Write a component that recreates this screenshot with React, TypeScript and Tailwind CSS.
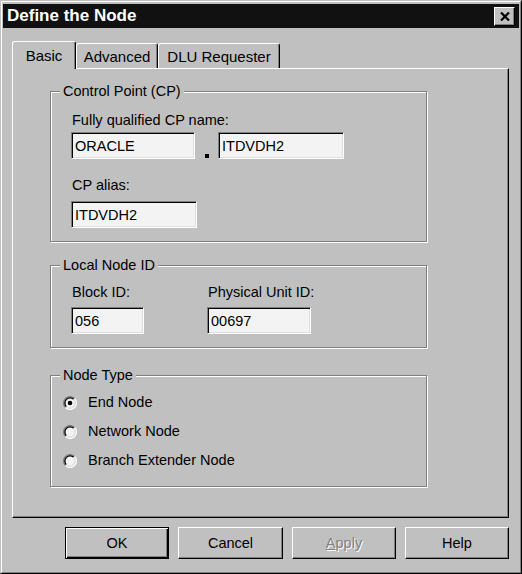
import type { ReactNode } from 'react';

const tabs = [
  { label: 'Basic', width: 'w-[64px]', active: true },
  { label: 'Advanced', width: 'w-[82px]', active: false },
  { label: 'DLU Requester', width: 'w-[122px]', active: false },
];

const Field = ({ value, className }: { value: string; className: string }) => (
  <input
    readOnly
    value={value}
    className={`h-[27px] bg-[#f3f3f3] pl-[3px] text-black outline-none border border-t-[#808080] border-l-[#808080] border-r-white border-b-white shadow-[inset_1px_1px_0_#000,inset_-1px_-1px_0_#dfdfdf] ${className}`}
  />
);

const GroupBox = ({ title, className, children }: { title: string; className: string; children: ReactNode }) => (
  <fieldset className={`w-[377px] border border-[#808080] shadow-[inset_1px_1px_0_#fff,1px_1px_0_#fff] ${className}`}>
    <legend className="ml-[9px] px-[3px] bg-[#c0c0c0] leading-[17px]">{title}</legend>
    {children}
  </fieldset>
);

const Radio = ({ label, checked }: { label: string; checked?: boolean }) => (
  <div className="h-[29px] flex items-center">
    <svg width="14" height="14" viewBox="0 0 12 12" className="mr-[11px]">
      <circle cx="6" cy="6" r="4.5" fill="#f3f3f3" />
      <path d="M2.11 9.89 A5.5 5.5 0 0 1 9.89 2.11" fill="none" stroke="#808080" strokeWidth="1.1" />
      <path d="M9.89 2.11 A5.5 5.5 0 0 1 2.11 9.89" fill="none" stroke="#fff" strokeWidth="1.1" />
      <path d="M2.82 9.18 A4.5 4.5 0 0 1 9.18 2.82" fill="none" stroke="#000" strokeWidth="1.1" />
      <path d="M9.18 2.82 A4.5 4.5 0 0 1 2.82 9.18" fill="none" stroke="#dfdfdf" strokeWidth="1.1" />
      {checked && <circle cx="6" cy="6" r="2" fill="#000" />}
    </svg>
    <span>{label}</span>
  </div>
);

const Button = ({ children, className, isDefault }: { children: ReactNode; className: string; isDefault?: boolean }) => (
  <button
    className={`h-[32px] flex items-center justify-center ${
      isDefault
        ? 'border border-black shadow-[inset_1px_1px_0_#fff,inset_-1px_-1px_0_#000,inset_-2px_-2px_0_#808080]'
        : 'border border-t-white border-l-white border-r-black border-b-black shadow-[inset_-1px_-1px_0_#808080]'
    } ${className}`}
  >
    {children}
  </button>
);

export default function App() {
  return (
    <div className="w-[522px] h-[574px] bg-[#c0c0c0] border border-[#c0c0c0] border-r-black border-b-black font-['Liberation_Sans',Arial,sans-serif] text-[14.5px] leading-[17px] text-black">
      <div className="h-full flex flex-col border border-white border-r-[#808080] border-b-[#808080] px-[1px] pt-[2px]">
        {/* title bar */}
        <div className="h-[24px] bg-[#111111] flex items-center justify-between pl-[4px] pr-[4px]">
          <span className="text-white font-bold text-[17px] leading-[20px]">Define the Node</span>
          <div className="w-[21px] h-[19px] bg-[#c0c0c0] flex items-center justify-center border border-t-white border-l-white border-r-black border-b-black shadow-[inset_-1px_-1px_0_#808080]">
            <svg width="10" height="9" viewBox="0 0 10 9">
              <path d="M1 0.5 L9 8.5 M9 0.5 L1 8.5" stroke="#000" strokeWidth="2.2" />
            </svg>
          </div>
        </div>

        {/* tabs */}
        <div className="mt-[13px] ml-[9px] flex items-end">
          {tabs.map((tab) => (
            <div
              key={tab.label}
              className={`${tab.width} flex items-center justify-center bg-[#c0c0c0] rounded-t-[3px] border-l border-t border-l-white border-t-white border-r border-r-black shadow-[inset_-1px_0_0_#808080] text-[15px] ${
                tab.active ? 'h-[28px] -mb-[1px] relative z-10' : 'h-[25px]'
              }`}
            >
              {tab.label}
            </div>
          ))}
        </div>

        {/* panel */}
        <div className="ml-[9px] mr-[10px] h-[450px] border border-t-white border-l-white border-r-black border-b-black shadow-[inset_-1px_-1px_0_#808080] pt-[14px] pl-[37px]">
          <GroupBox title="Control Point (CP)" className="">
            <div className="pl-[20px] pt-[12px] pb-[13px]">
              <div className="pl-[1px]">Fully qualified CP name:</div>
              <div className="mt-[3px] flex items-end">
                <Field value="ORACLE" className="w-[124px]" />
                <div className="ml-[10px] mr-[9px] mb-[1px] w-[4px] h-[4px] bg-black" />
                <Field value="ITDVDH2" className="w-[126px]" />
              </div>
              <div className="mt-[18px] pl-[1px]">CP alias:</div>
              <div className="mt-[7px]">
                <Field value="ITDVDH2" className="w-[126px]" />
              </div>
            </div>
          </GroupBox>

          <GroupBox title="Local Node ID" className="mt-[15px]">
            <div className="pl-[20px] pt-[10px] pb-[13px] flex">
              <div className="w-[136px]">
                <div className="pl-[1px]">Block ID:</div>
                <Field value="056" className="mt-[6px] w-[73px]" />
              </div>
              <div>
                <div className="pl-[1px]">Physical Unit ID:</div>
                <Field value="00697" className="mt-[6px] w-[104px]" />
              </div>
            </div>
          </GroupBox>

          <GroupBox title="Node Type" className="mt-[19px]">
            <div className="pl-[12px] pt-[4px] pb-[11px]">
              <Radio label="End Node" checked />
              <Radio label="Network Node" />
              <Radio label="Branch Extender Node" />
            </div>
          </GroupBox>
        </div>

        {/* buttons */}
        <div className="mt-[9px] pr-[10px] flex justify-end gap-[9px]">
          <Button className="w-[104px]" isDefault>OK</Button>
          <Button className="w-[105px]">Cancel</Button>
          <Button className="w-[104px] text-[#808080] [text-shadow:1px_1px_0_#fff]">
            <span className="underline">A</span>pply
          </Button>
          <Button className="w-[104px]">Help</Button>
        </div>
      </div>
    </div>
  );
}
